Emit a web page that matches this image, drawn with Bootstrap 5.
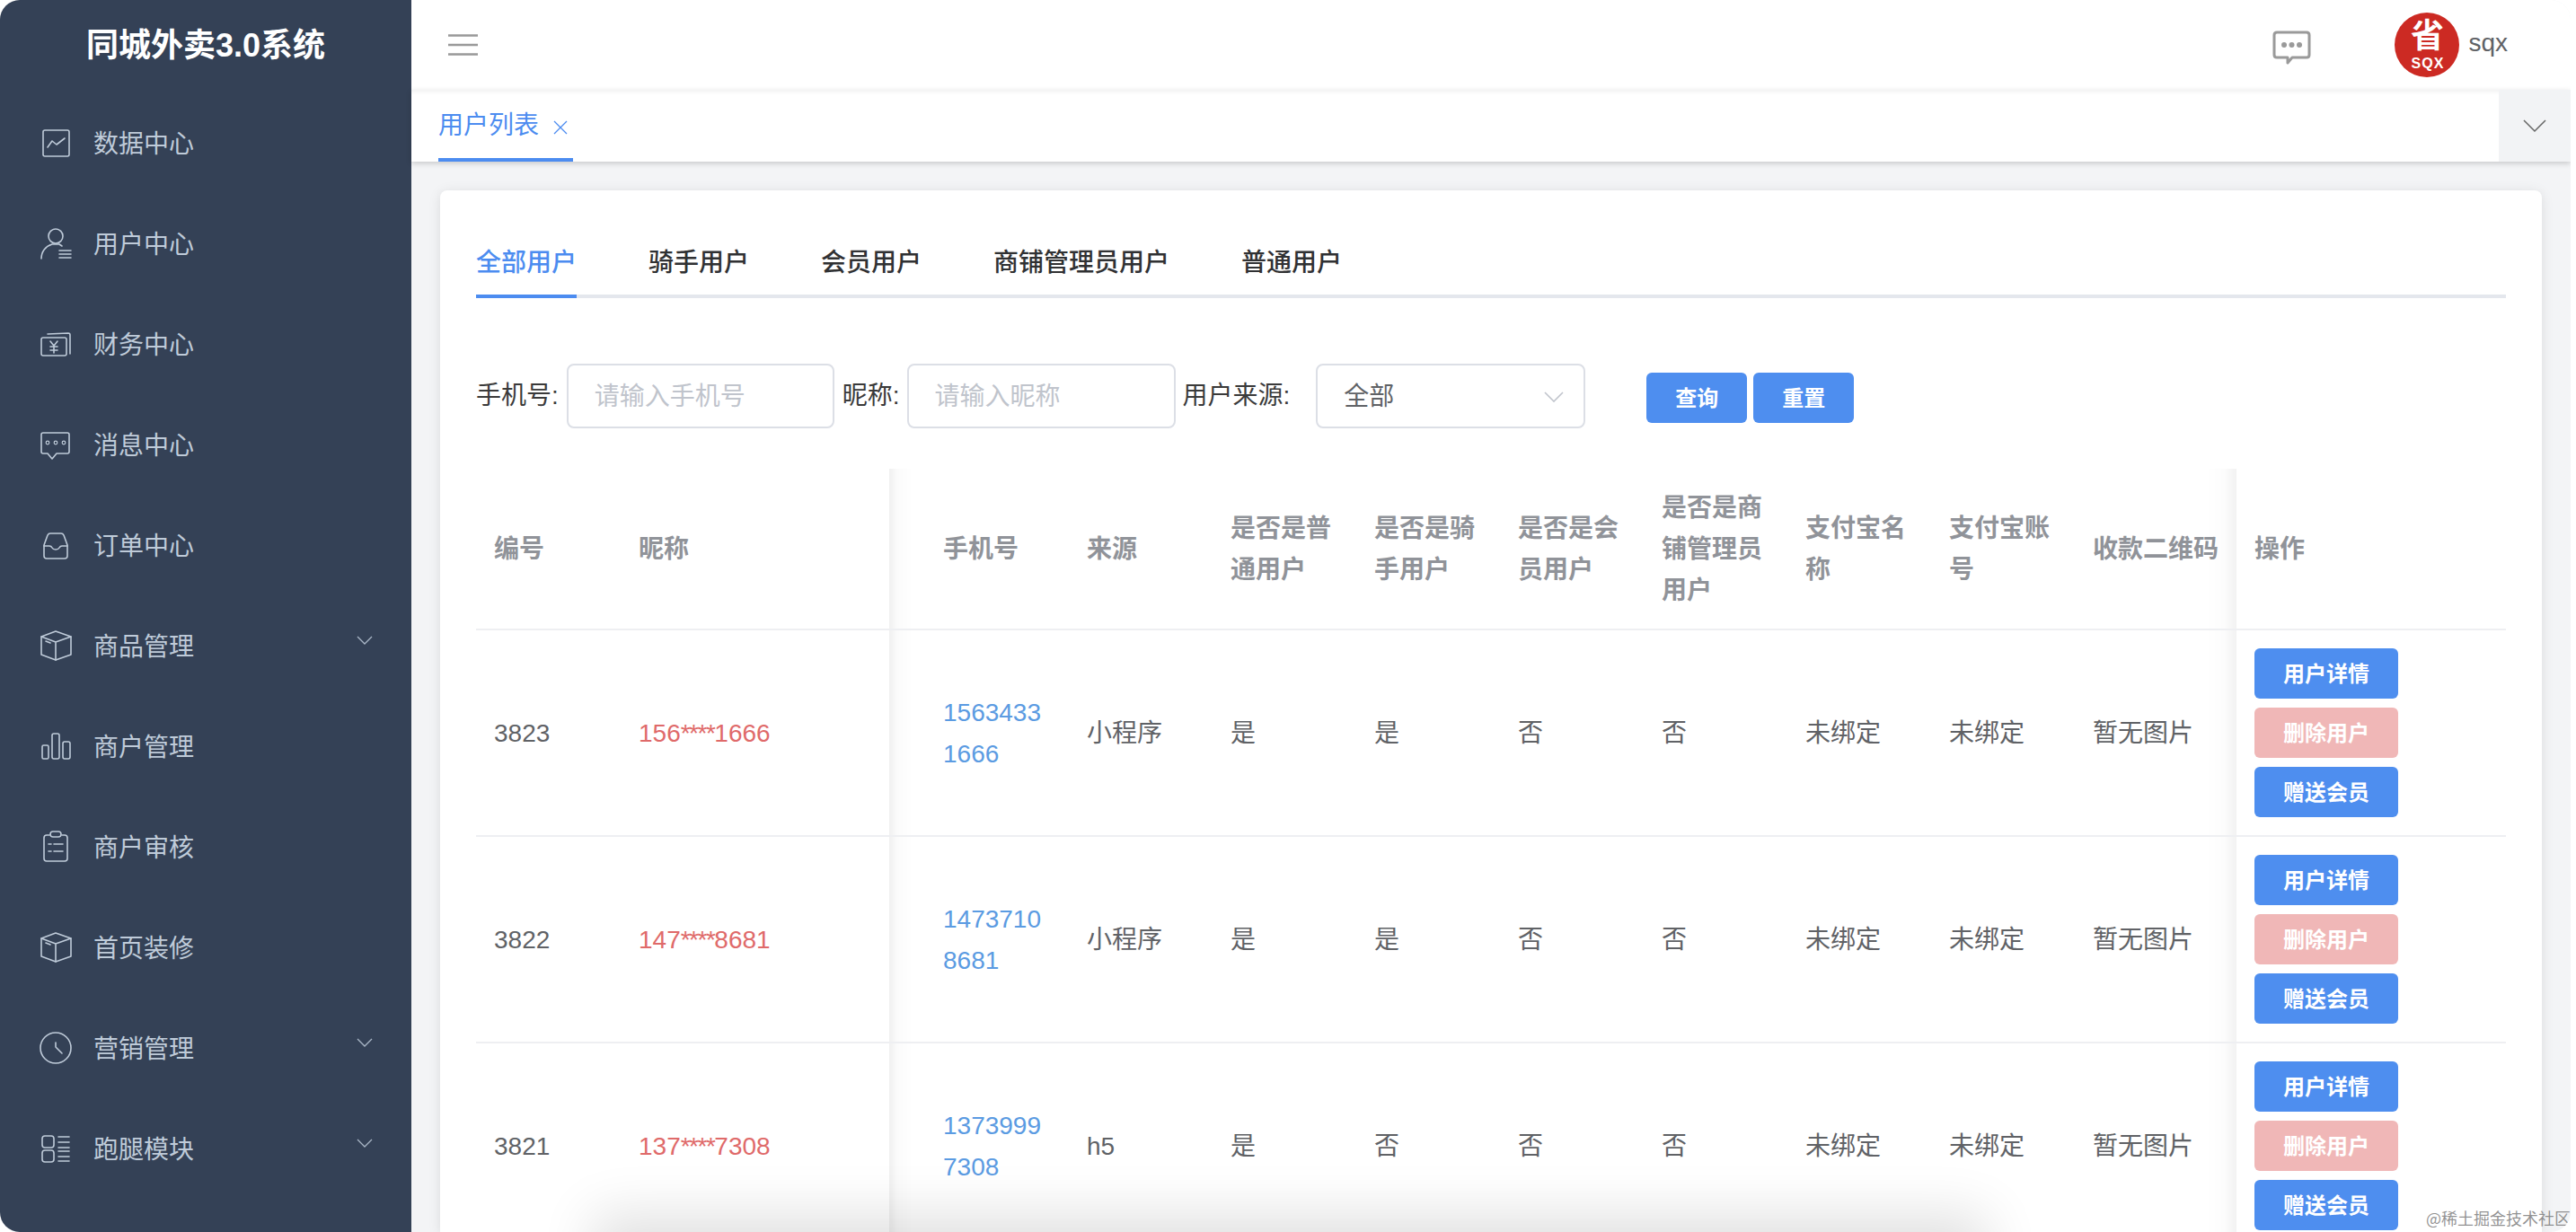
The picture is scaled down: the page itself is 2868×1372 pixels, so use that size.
<!DOCTYPE html>
<html lang="zh-CN">
<head>
<meta charset="utf-8">
<title>同城外卖3.0系统</title>
<link href="https://cdn.jsdelivr.net/npm/bootstrap@5.3.0/dist/css/bootstrap.min.css" rel="stylesheet">
<style>
html,body{height:100%;margin:0;background:#fff;overflow:hidden}
body{font-family:"Liberation Sans","Noto Sans CJK SC",sans-serif;font-size:28px;color:#606266}
a{text-decoration:none}
.app-frame{width:2862px;height:1372px;border-radius:22px;overflow:hidden;position:relative;background:#f3f4f6}
.side-pane{width:458px;background:#344156;flex:none}
.side-logo{height:103px;line-height:102px;font-size:36px;font-weight:700;color:#fff;text-align:center;flex:none}
.side-item{height:112px;padding-left:44px;padding-right:43px;color:#bfcbd9;font-size:28px;gap:24px;flex:none}
.side-item span{padding-top:3px}
.side-ico{width:36px;height:36px;flex:none;fill:none;stroke:#bfcbd9;stroke-width:1.6;stroke-linecap:round;stroke-linejoin:round}
.side-caret{width:18px;height:11px;margin-left:auto;margin-top:-11px;fill:none;stroke:#a9b6c6;stroke-width:1.3}
.main-pane{min-width:0;height:1372px}
.top-strip{height:100px;background:#fff;padding-left:41px;padding-right:70px;flex:none}
.burger{width:33px;height:24px;fill:none;stroke:#999;stroke-width:2.4}
.msg-ico{width:43px;height:38px;fill:none;stroke:#9a9a9a;stroke-width:3;stroke-linejoin:round;margin-right:93px;margin-top:6px}
.avatar-disc{width:72px;height:72px;border-radius:50%;background:#cc2a23;color:#fff;flex:none;line-height:1}
.avatar-big{font-size:37px;font-weight:700;height:42px;line-height:42px;margin-top:6px}
.avatar-small{font-size:16px;font-weight:700;letter-spacing:1px;height:16px;line-height:16px;margin-left:1px;margin-top:1px}
.user-name{margin-left:10px;color:#606266;line-height:1;margin-top:-4px}
.tab-strip{height:80px;background:#fff;box-shadow:inset 0 5px 4px -3px #f0f0f0,0 2px 6px rgba(0,0,0,.18);position:relative;padding-left:30px;flex:none}
.page-tab{height:80px;width:150px;color:#4c8cf0;border-bottom:4px solid #4c8cf0;line-height:80px;white-space:nowrap}
.page-tab svg{width:16px;height:16px;margin-left:16px;fill:none;stroke:#4c8cf0;stroke-width:1.3;vertical-align:-1px}
.tab-more{width:80px;height:80px;background:#f2f3f5}
.tab-more svg{width:26px;height:15px;fill:none;stroke:#666;stroke-width:1.5}
.content-area{padding:32px 32px 0 32px;min-height:0;flex:1 1 0}
.sheet{background:#fff;border-radius:8px 8px 0 0;box-shadow:0 2px 14px rgba(0,0,0,.1);padding:40px 40px 0;height:100%;overflow:hidden}
.kind-tabs{column-gap:80px;border-bottom:4px solid #e4e7ed;height:80px}
.kind-tab{height:80px;line-height:82px;color:#303133;font-weight:500;margin-bottom:-4px;padding:0;border-bottom:4px solid transparent;display:block}
.kind-tab.on{color:#4c8cf0;border-bottom-color:#4c8cf0}
.filter-line{margin-top:73px;height:72px}
.filter-line label{color:#3a3a3a;white-space:nowrap;line-height:76px}
.fake-input{height:72px;border:2px solid #dcdfe6;border-radius:8px;background:#fff;color:#606266;font-size:28px;padding:2px 29px 0;box-shadow:none}
.fake-input::placeholder{color:#c0c4cc;opacity:1}
.w-phone{width:298px;margin:0 9px 0 9px}
.w-nick{width:299px;margin:0 8px 0 8px}
.select-box{width:300px;margin-left:29px;padding-right:22px;color:#606266}
.select-box svg{width:22px;height:12px;fill:none;stroke:#c0c4cc;stroke-width:1.6}
.act-btn{width:112px;height:56px;padding:0;background:#4e8eef;border:0;border-radius:6px;color:#fff;font-size:24px;font-weight:700;line-height:58px;margin-top:4px}
.btn-go{margin-left:68px;margin-right:7px}
.user-table{table-layout:fixed;width:2260px;margin:45px 0 0;color:#606266;--bs-table-bg:transparent;border-color:#eeeff2}
.user-table>:not(caption)>*>*{padding:21px 20px 19px;border-bottom:2px solid #eeeff2;line-height:46px;vertical-align:middle;word-break:break-all;box-shadow:none}
.user-table>tbody>tr>.act-cell{padding:20px}
.user-table th{color:#909399;font-weight:700}
.user-table tbody tr{height:230px}
.user-table .pad-none{padding:0}
.edge-left{background-image:linear-gradient(to right,rgba(0,0,0,.06),rgba(0,0,0,.015) 9px,transparent 26px)}
.edge-right{background-image:linear-gradient(to left,rgba(0,0,0,.05),rgba(0,0,0,.012) 14px,transparent 34px)}
.nick-text{color:#df6a6a}
.mask-stars{letter-spacing:-1.5px}
.phone-link{color:#5b9be2}
.row-btn{display:block;width:160px;height:56px;padding:0;border:0;border-radius:6px;background:#4e8eef;color:#fff;font-size:24px;font-weight:700;line-height:57px;margin-bottom:10px}
.row-btn:last-child{margin-bottom:0}
.row-btn.pale{background:#f0b7b7}
.dock-haze{position:absolute;left:690px;right:680px;bottom:-60px;height:50px;background:rgba(0,0,0,.12);box-shadow:0 0 60px 30px rgba(0,0,0,.12);pointer-events:none}
.stamp{position:absolute;right:0;bottom:6px;font-size:18px;line-height:20px;color:rgba(110,110,110,.75);font-family:"Noto Sans CJK SC",sans-serif;white-space:nowrap}
</style>
</head>
<body>
<div class="app-frame d-flex">
  <aside class="side-pane d-flex flex-column">
    <div class="side-logo">同城外卖3.0系统</div>
    <nav class="nav flex-column flex-nowrap">
      <a class="side-item d-flex align-items-center"><svg class="side-ico" viewBox="0 0 36 36"><rect x="4" y="4" width="29" height="29" rx="2"/><path d="M9 23l5-7 5 4 9-7"/></svg><span>数据中心</span></a>
      <a class="side-item d-flex align-items-center"><svg class="side-ico" viewBox="0 0 36 36"><circle cx="18" cy="10" r="8"/><path d="M2 35c0-8 5-14 12-16h8l3 2"/><path d="M22 26h13M22 30h13M22 34h13"/></svg><span>用户中心</span></a>
      <a class="side-item d-flex align-items-center"><svg class="side-ico" viewBox="0 0 36 36"><rect x="2" y="11" width="28" height="20" rx="2"/><path d="M9 7l23-1q2 0 2 2v21"/><path d="M12 15l4 5 4-5M16 20v8M12 21h8M12 25h8"/></svg><span>财务中心</span></a>
      <a class="side-item d-flex align-items-center"><svg class="side-ico" viewBox="0 0 36 36"><path d="M4 5h27q2 0 2 2v19q0 2-2 2H19l-5 6-5-6H4q-2 0-2-2V7q0-2 2-2z"/><circle cx="9" cy="16" r="1.8" stroke-width="1.2"/><circle cx="18" cy="16" r="1.8" stroke-width="1.2"/><circle cx="27" cy="16" r="1.8" stroke-width="1.2"/></svg><span>消息中心</span></a>
      <a class="side-item d-flex align-items-center"><svg class="side-ico" viewBox="0 0 36 36"><path d="M5 18L9 7q1-2 3-2h12q2 0 3 2l4 11v12q0 3-3 3H8q-3 0-3-3z"/><path d="M5 19h6q2 0 3 2t4 2 4-2 3-2h6"/></svg><span>订单中心</span></a>
      <a class="side-item d-flex align-items-center"><svg class="side-ico" viewBox="0 0 36 36"><path d="M18 2l17 6v20l-17 6-16-6V8z"/><path d="M2 8l16 6 17-6M18 14v20M7 13l5 2"/></svg><span>商品管理</span><svg class="side-caret" viewBox="0 0 18 11"><path d="M1 1l8 8 8-8"/></svg></a>
      <a class="side-item d-flex align-items-center"><svg class="side-ico" viewBox="0 0 36 36"><rect x="3" y="17" width="7" height="15" rx="1.5"/><rect x="14" y="4" width="8" height="28" rx="2"/><rect x="26" y="13" width="8" height="19" rx="2"/></svg><span>商户管理</span></a>
      <a class="side-item d-flex align-items-center"><svg class="side-ico" viewBox="0 0 36 36"><path d="M11 5H8Q5 5 5 8v23q0 3 3 3h20q3 0 3-3V8q0-3-3-3h-3"/><rect x="12" y="1" width="12" height="6" rx="3"/><path d="M10 15h3M16 15h10M10 23h3M16 23h10"/></svg><span>商户审核</span></a>
      <a class="side-item d-flex align-items-center"><svg class="side-ico" viewBox="0 0 36 36"><path d="M18 2l17 6v20l-17 6-16-6V8z"/><path d="M2 8l16 6 17-6M18 14v20M7 13l5 2"/></svg><span>首页装修</span></a>
      <a class="side-item d-flex align-items-center"><svg class="side-ico" viewBox="0 0 36 36"><circle cx="18" cy="18" r="17"/><path d="M18 12v5l7 7"/></svg><span>营销管理</span><svg class="side-caret" viewBox="0 0 18 11"><path d="M1 1l8 8 8-8"/></svg></a>
      <a class="side-item d-flex align-items-center"><svg class="side-ico" viewBox="0 0 36 36"><rect x="3" y="4" width="13" height="13" rx="3"/><rect x="3" y="20" width="13" height="13" rx="3"/><path d="M21 5h12M21 11h12M21 17h12M21 21h12M21 27h12M21 32h12"/></svg><span>跑腿模块</span><svg class="side-caret" viewBox="0 0 18 11"><path d="M1 1l8 8 8-8"/></svg></a>
    </nav>
  </aside>
  <main class="main-pane flex-grow-1 d-flex flex-column">
    <header class="top-strip d-flex align-items-center">
      <svg class="burger" viewBox="0 0 33 24"><path d="M0 1.5h33M0 12h33M0 22.500h33"/></svg>
      <svg class="msg-ico ms-auto" viewBox="0 0 43 38"><path d="M5 2h33q3 0 3 3v22q0 3-3 3H22l-5 6v-6H5q-3 0-3-3V5q0-3 3-3z"/><g fill="#9a9a9a" stroke="none"><circle cx="13" cy="16" r="3"/><circle cx="21.500" cy="16" r="3"/><circle cx="30" cy="16" r="3"/></g></svg>
      <div class="avatar-disc d-flex flex-column align-items-center"><span class="avatar-big">省</span><span class="avatar-small">SQX</span></div>
      <span class="user-name">sqx</span>
    </header>
    <div class="tab-strip d-flex justify-content-between">
      <div class="page-tab">用户列表<svg viewBox="0 0 16 16"><path d="M1 1l14 14M15 1L1 15"/></svg></div>
      <div class="tab-more d-flex align-items-center justify-content-center"><svg viewBox="0 0 26 15"><path d="M1 1l12 12L25 1"/></svg></div>
    </div>
    <div class="content-area">
      <section class="sheet">
        <ul class="nav kind-tabs">
          <li><a class="kind-tab on">全部用户</a></li>
          <li><a class="kind-tab">骑手用户</a></li>
          <li><a class="kind-tab">会员用户</a></li>
          <li><a class="kind-tab">商铺管理员用户</a></li>
          <li><a class="kind-tab">普通用户</a></li>
        </ul>
        <form class="filter-line d-flex align-items-center">
          <label>手机号:</label><input class="form-control fake-input w-phone" placeholder="请输入手机号">
          <label>昵称:</label><input class="form-control fake-input w-nick" placeholder="请输入昵称">
          <label>用户来源:</label>
          <div class="fake-input select-box d-flex align-items-center justify-content-between"><span>全部</span><svg viewBox="0 0 22 12"><path d="M1 1l10 10L21 1"/></svg></div>
          <button type="button" class="btn act-btn btn-go">查询</button>
          <button type="button" class="btn act-btn">重置</button>
        </form>
        <table class="table user-table">
          <colgroup><col style="width:161px"><col style="width:299px"><col style="width:40px"><col style="width:160px"><col style="width:160px"><col style="width:160px"><col style="width:160px"><col style="width:160px"><col style="width:160px"><col style="width:160px"><col style="width:160px"><col style="width:180px"><col style="width:300px"></colgroup>
          <thead>
            <tr><th>编号</th><th>昵称</th><th class="pad-none edge-left"></th><th>手机号</th><th>来源</th><th>是否是普通用户</th><th>是否是骑手用户</th><th>是否是会员用户</th><th>是否是商铺管理员用户</th><th>支付宝名称</th><th>支付宝账号</th><th class="edge-right">收款二维码</th><th>操作</th></tr>
          </thead>
          <tbody>
            <tr><td>3823</td><td class="nick-text">156<span class="mask-stars">****</span>1666</td><td class="pad-none edge-left"></td><td><a class="phone-link">15634331666</a></td><td>小程序</td><td>是</td><td>是</td><td>否</td><td>否</td><td>未绑定</td><td>未绑定</td><td class="edge-right">暂无图片</td><td class="act-cell"><button class="btn row-btn">用户详情</button><button class="btn row-btn pale">删除用户</button><button class="btn row-btn">赠送会员</button></td></tr>
            <tr><td>3822</td><td class="nick-text">147<span class="mask-stars">****</span>8681</td><td class="pad-none edge-left"></td><td><a class="phone-link">14737108681</a></td><td>小程序</td><td>是</td><td>是</td><td>否</td><td>否</td><td>未绑定</td><td>未绑定</td><td class="edge-right">暂无图片</td><td class="act-cell"><button class="btn row-btn">用户详情</button><button class="btn row-btn pale">删除用户</button><button class="btn row-btn">赠送会员</button></td></tr>
            <tr><td>3821</td><td class="nick-text">137<span class="mask-stars">****</span>7308</td><td class="pad-none edge-left"></td><td><a class="phone-link">13739997308</a></td><td>h5</td><td>是</td><td>否</td><td>否</td><td>否</td><td>未绑定</td><td>未绑定</td><td class="edge-right">暂无图片</td><td class="act-cell"><button class="btn row-btn">用户详情</button><button class="btn row-btn pale">删除用户</button><button class="btn row-btn">赠送会员</button></td></tr>
          </tbody>
        </table>
      </section>
    </div>
  </main>
  <div class="dock-haze"></div>
  <div class="stamp">@稀土掘金技术社区</div>
</div>
<script src="https://cdn.jsdelivr.net/npm/bootstrap@5.3.0/dist/js/bootstrap.bundle.min.js"></script>
</body>
</html>
